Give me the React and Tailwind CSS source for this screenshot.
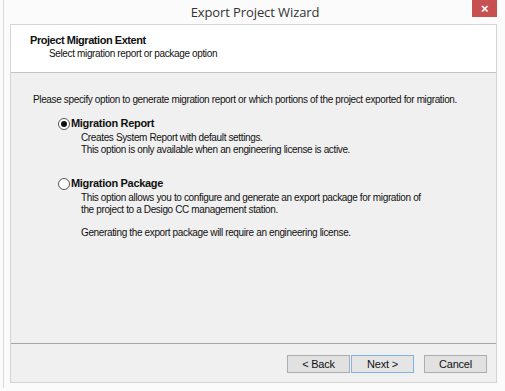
const Radio = ({ checked }) => (
  <span className="flex h-[12px] w-[12px] items-center justify-center rounded-full border border-[#555] bg-white">
    {checked ? <span className="h-[6px] w-[6px] rounded-full bg-[#111]" /> : null}
  </span>
);

const WizButton = ({ label, primary }) => (
  <button
    type="button"
    className={
      primary
        ? "flex h-[18px] w-[63px] items-center justify-center border border-[#7eb4ea] bg-[#e5e5e5] text-[11px] tracking-[-0.2px] text-[#111]"
        : "flex h-[18px] w-[63px] items-center justify-center border border-[#adadad] bg-[#e1e1e1] text-[11px] tracking-[-0.2px] text-[#111]"
    }
  >
    {label}
  </button>
);

const App = () => {
  return (
    <div className="h-[391px] w-[505px] bg-[#fbfbfb] pl-[3px] font-['Liberation_Sans',Arial,sans-serif] text-[10px] tracking-[-0.36px] text-[#111]">
      <div className="flex h-[388px] w-[495px] flex-col border-l border-[#d9d9d9]">
        <div className="relative flex h-[24px] shrink-0 items-center justify-center">
          <span className="pl-[8px] pt-[2px] font-['Open_Sans',sans-serif] text-[13px] tracking-[-0.1px] text-[#333]">
            Export Project Wizard
          </span>
          <div className="absolute right-[1px] top-0 flex h-[17px] w-[25px] items-center justify-center bg-[#c75050] text-[13px] font-bold text-white">
            ×
          </div>
        </div>

        <div className="ml-[6px] mr-[1px] flex h-[359px] flex-col border border-[#d5d5d5] bg-[#f0f0f0]">
          <div className="h-[48px] shrink-0 border-b border-[#c4c4c4] bg-white pl-[19px] pt-[9px]">
            <p className="text-[11px] font-bold leading-[13px] tracking-[-0.45px]">Project Migration Extent</p>
            <p className="pl-[19px] leading-[13px]">Select migration report or package option</p>
          </div>

          <div className="flex-1 pl-[22px] pt-[20px]">
            <p className="whitespace-nowrap leading-[13px]">
              Please specify option to generate migration report or which portions of the project exported for migration.
            </p>

            <div className="mt-[11px] pl-[25px]">
              <div className="flex items-center gap-[1px]">
                <Radio checked />
                <span className="text-[11px] font-bold leading-[13px] tracking-[-0.3px]">Migration Report</span>
              </div>
              <div className="mt-[2px] whitespace-nowrap pl-[23px] leading-[12px]">
                <p>Creates System Report with default settings.</p>
                <p>This option is only available when an engineering license is active.</p>
              </div>
            </div>

            <div className="mt-[21px] pl-[25px]">
              <div className="flex items-center gap-[1px]">
                <Radio />
                <span className="text-[11px] font-bold leading-[13px] tracking-[-0.3px]">Migration Package</span>
              </div>
              <div className="mt-[2px] whitespace-nowrap pl-[23px] leading-[12px]">
                <p>This option allows you to configure and generate an export package for migration of</p>
                <p>the project to a Desigo CC management station.</p>
                <p className="mt-[11px]">Generating the export package will require an engineering license.</p>
              </div>
            </div>
          </div>

          <div className="h-[39px] shrink-0 border-t border-[#a8a8a8] pr-[9px] pt-[11px]">
            <div className="flex justify-end">
              <WizButton label="< Back" />
              <div className="ml-[1px]">
                <WizButton label="Next >" primary />
              </div>
              <div className="ml-[10px]">
                <WizButton label="Cancel" />
              </div>
            </div>
          </div>
        </div>
      </div>
    </div>
  );
};

export default App;
